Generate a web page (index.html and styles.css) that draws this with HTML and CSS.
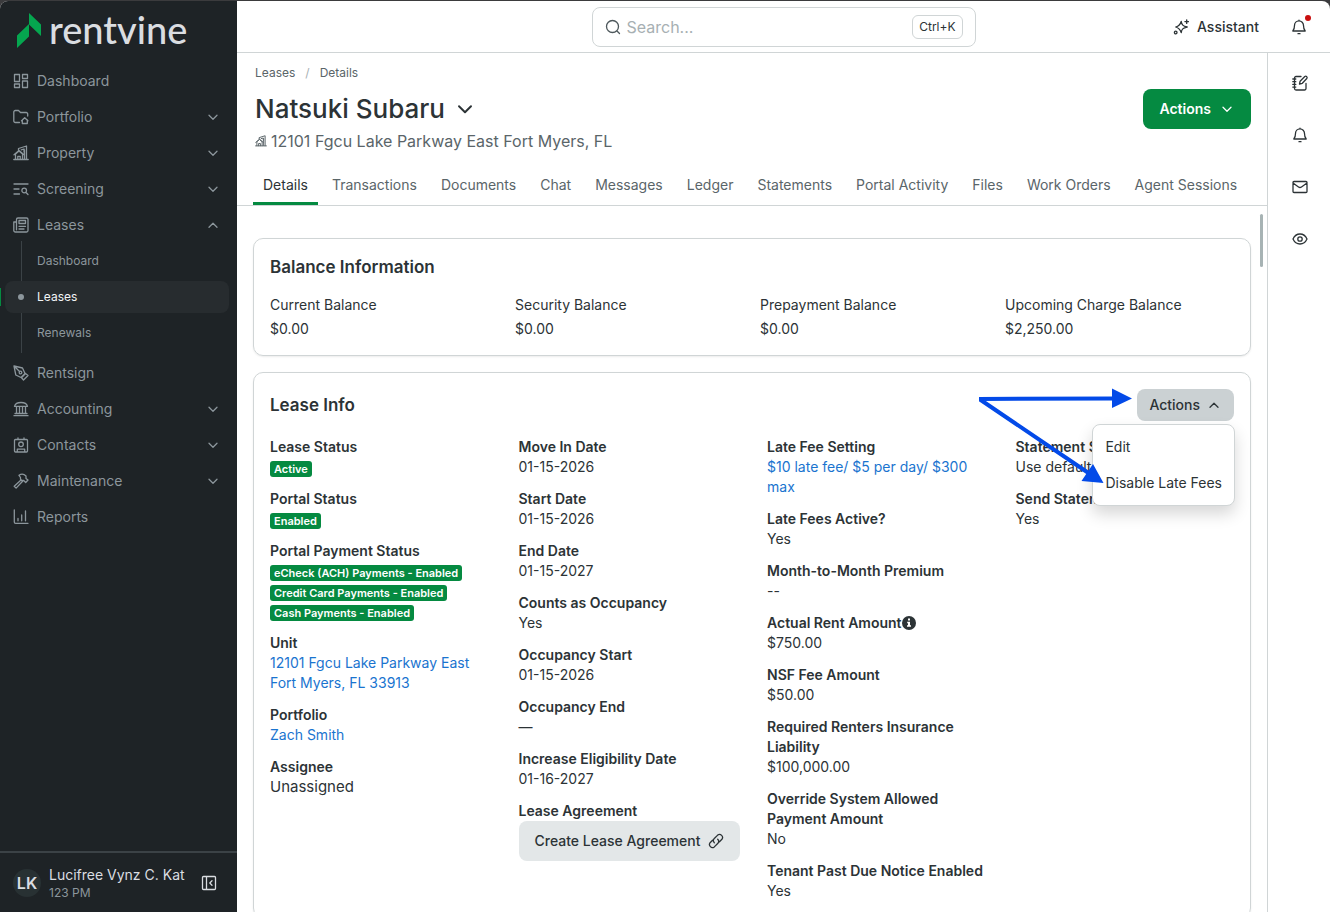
FILE: index.html
```html
<!DOCTYPE html>
<html lang="en">

<head>
  <meta charset="UTF-8">
  <meta name="viewport" content="width=device-width, initial-scale=1.0">
  <title>Natsuki Subaru - Rentvine</title>
  <link rel="stylesheet" href="styles.css">
</head>

<body>
  <svg class="sprite" aria-hidden="true">
    <symbol id="i-down" viewBox="0 0 16 16"><path d="M4 6.200 8 10.200 12 6.200"/></symbol>
    <symbol id="i-up" viewBox="0 0 16 16"><path d="M4 10.200 8 6.200l4 4"/></symbol>
    <symbol id="i-building" viewBox="0 0 16 16"><path d="M.8 14.500h14.400M2.500 14.300V9L6 6l3.500 3v5.300M1 9.800 6 5.500l5 4.300M4.800 14.300v-3h2.400v3M5.500 5V3.500L13.500 1v13.300M8.300 4.800l2.700-.8v3M11.500 5v9"/></symbol>
    <symbol id="i-bell" viewBox="0 0 16 16"><path d="M1.800 12h12.400c-1.300-1.500-1.700-2.800-1.700-5.600a4.500 4.500 0 0 0-9 0C3.500 9.200 3.100 10.500 1.800 12zM7 14.700h2M8 1.200v.5"/></symbol>
  </svg>

  <div class="app">
    <aside class="sidebar">
      <a class="logo" href="#">
        <svg viewBox="0 0 26 38" width="26" height="38" aria-hidden="true">
          <path d="M1 23.500 13 12v12.500L1 36z M13 1l12 11.500V24L13 12.500z"/>
        </svg>
        <span>rentvine</span>
      </a>

      <nav class="nav">
        <a class="nav-item" href="#">
          <svg viewBox="0 0 16 16"><path d="M1.500 1.500h5v7h-5zM9.500 1.500h5v4h-5zM1.500 11h5v3.500h-5zM9.500 8h5v6.500h-5z"/></svg>
          <span>Dashboard</span>
        </a>
        <button class="nav-item" type="button">
          <svg viewBox="0 0 16 16"><path d="M6.500 13.500H2.300A1.500 1.500 0 0 1 .8 12V3a1.500 1.500 0 0 1 1.500-1.500h3.200l2 2h5.700A1.500 1.500 0 0 1 14.700 5v2M8.500 11.800l3.200-3 3.200 3M9.300 11v3.500h5V11"/></svg>
          <span>Portfolio</span>
          <svg class="chev"><use href="#i-down"/></svg>
        </button>
        <button class="nav-item" type="button">
          <svg><use href="#i-building"/></svg>
          <span>Property</span>
          <svg class="chev"><use href="#i-down"/></svg>
        </button>
        <button class="nav-item" type="button">
          <svg viewBox="0 0 16 16"><path d="M1 3h14M1 8h5M1 13h5.500M13.500 9.500a2.300 2.300 0 1 1-4.600 0 2.300 2.300 0 0 1 4.600 0zM12.800 11.200l2.200 2.300"/></svg>
          <span>Screening</span>
          <svg class="chev"><use href="#i-down"/></svg>
        </button>
        <button class="nav-item" type="button">
          <svg viewBox="0 0 16 16"><path d="M3.500 12.800V2.500a1.500 1.500 0 0 1 1.500-1.500h8.500A1.500 1.500 0 0 1 15 2.500v11a1.500 1.500 0 0 1-1.500 1.500H2.300A1.500 1.500 0 0 1 .8 13.500V5h2.700M6 3.500h6.500v3H6zM6 9.300h6.500M6 12h5"/></svg>
          <span>Leases</span>
          <svg class="chev"><use href="#i-up"/></svg>
        </button>
        <div class="subnav">
          <a class="subnav-item" href="#">Dashboard</a>
          <a class="subnav-item active" href="#">Leases</a>
          <a class="subnav-item" href="#">Renewals</a>
        </div>
        <a class="nav-item" href="#">
          <svg viewBox="0 0 16 16"><path d="M1 1l8.500 2 2.500 5.500-4 4L2.800 10zM1 1l5.300 5.300M8.800 7.500a1.300 1.300 0 1 1-2.600 0 1.300 1.300 0 0 1 2.600 0zM8.500 12.800l4-4.300 2.500 2-4.500 4.500z"/></svg>
          <span>Rentsign</span>
        </a>
        <button class="nav-item" type="button">
          <svg viewBox="0 0 16 16"><path d="M1 14.700h14M2 12.500h12M1.500 5.300h13C14 3.500 11.500 1.500 8 1.500S2 3.500 1.500 5.300zM3.500 5.500v7M6.500 5.500v7M9.500 5.500v7M12.500 5.500v7"/></svg>
          <span>Accounting</span>
          <svg class="chev"><use href="#i-down"/></svg>
        </button>
        <button class="nav-item" type="button">
          <svg viewBox="0 0 16 16"><path d="M2.500 2.500h11a1 1 0 0 1 1 1v10.500a1 1 0 0 1-1 1h-11a1 1 0 0 1-1-1V3.500a1 1 0 0 1 1-1zM5 .8v1.700M11 .8v1.700M10.300 7.300a2.300 2.300 0 1 1-4.600 0 2.300 2.300 0 0 1 4.600 0zM4.300 14.500v-2.300h7.400v2.300"/></svg>
          <span>Contacts</span>
          <svg class="chev"><use href="#i-down"/></svg>
        </button>
        <button class="nav-item" type="button">
          <svg viewBox="0 0 16 16"><path d="M6 2.300c2.500-1.800 5-1.300 7 .7v2.500l2 1.500-2.300 2.500-2-2H8.800L7.500 6.200V4.500zM8 7l-6.800 6.200 1.900 1.900 6.500-6.800"/></svg>
          <span>Maintenance</span>
          <svg class="chev"><use href="#i-down"/></svg>
        </button>
        <a class="nav-item" href="#">
          <svg viewBox="0 0 16 16"><path d="M1.300 1v12a1.300 1.300 0 0 0 1.300 1.300H15M5 9.500v2.300M8.700 6v5.800M12.500 2v9.800"/></svg>
          <span>Reports</span>
        </a>
      </nav>

      <div class="user">
        <span class="avatar">LK</span>
        <div class="user-text">
          <p class="user-name">Lucifree Vynz C. Kat</p>
          <p class="user-time">123 PM</p>
        </div>
        <button class="icon-btn" type="button" aria-label="Collapse sidebar">
          <svg viewBox="0 0 16 16"><path d="M2.500 1.500h11a1 1 0 0 1 1 1v11a1 1 0 0 1-1 1h-11a1 1 0 0 1-1-1v-11a1 1 0 0 1 1-1zM5.500 1.500v13M11 5.800 8.800 8l2.200 2.200"/></svg>
        </button>
      </div>
    </aside>

    <div class="page">
      <header class="topbar">
        <label class="search" for="search">
          <svg viewBox="0 0 16 16"><path d="M13.500 7.500a6 6 0 1 1-12 0 6 6 0 0 1 12 0zM12 12l2.500 2.500"/></svg>
          <input id="search" type="text" placeholder="Search..." aria-label="Search">
          <kbd>Ctrl+K</kbd>
        </label>
        <div class="topbar-right">
          <button class="assistant" type="button">
            <svg viewBox="0 0 16 16"><path d="M8.200 2.300c.5 3.600 1.700 4.700 6 5.700-4.300 1-5.500 2.100-6 5.700-.9-3.600-2-4.700-5.500-5.700 3.500-1 4.600-2.100 5.500-5.700zM13.700.8v3.600M11.900 2.600h3.600M4 13.500a1.300 1.300 0 1 1-2.600 0 1.300 1.300 0 0 1 2.600 0z"/></svg>
            <span>Assistant</span>
          </button>
          <button class="icon-btn notify" type="button" aria-label="Notifications">
            <svg><use href="#i-bell"/></svg>
          </button>
        </div>
      </header>

      <div class="body">
        <main class="main">
          <div class="page-head">
            <div class="breadcrumb">
              <a href="#">Leases</a><span>/</span><a href="#">Details</a>
            </div>
            <div class="title-row">
              <h1>Natsuki Subaru</h1>
              <button class="icon-btn title-chev" type="button" aria-label="Switch lease">
                <svg><use href="#i-down"/></svg>
              </button>
              <button class="btn btn-primary" type="button">Actions <svg><use href="#i-down"/></svg></button>
            </div>
            <p class="address"><svg><use href="#i-building"/></svg> 12101 Fgcu Lake Parkway East Fort Myers, FL</p>
          </div>
          <nav class="tabs">
            <a class="active" href="#">Details</a>
            <a href="#">Transactions</a>
            <a href="#">Documents</a>
            <a href="#">Chat</a>
            <a href="#">Messages</a>
            <a href="#">Ledger</a>
            <a href="#">Statements</a>
            <a href="#">Portal Activity</a>
            <a href="#">Files</a>
            <a href="#">Work Orders</a>
            <a href="#">Agent Sessions</a>
          </nav>

          <div class="content">
            <section class="card balance">
              <h2>Balance Information</h2>
              <dl>
                <div><dt>Current Balance</dt><dd>$0.00</dd></div>
                <div><dt>Security Balance</dt><dd>$0.00</dd></div>
                <div><dt>Prepayment Balance</dt><dd>$0.00</dd></div>
                <div><dt>Upcoming Charge Balance</dt><dd>$2,250.00</dd></div>
              </dl>
            </section>

            <section class="card lease">
              <div class="card-head">
                <h2>Lease Info</h2>
                <div class="dropdown">
                  <button class="btn btn-small" type="button" aria-expanded="true">Actions <svg><use href="#i-up"/></svg></button>
                  <div class="menu">
                    <button type="button">Edit</button>
                    <button type="button">Disable Late Fees</button>
                  </div>
                  <svg class="arrows" viewBox="0 0 156 96" width="156" height="96" aria-hidden="true">
                    <path class="line" d="M1 10 136 9.500M2 10.500 112 85"/>
                    <path d="M134-.5 154 9.500 134 19zM125.500 94 103.500 92 115 75z"/>
                  </svg>
                </div>
              </div>

              <div class="columns">
                <dl>
                  <div><dt>Lease Status</dt><dd class="badges"><span>Active</span></dd></div>
                  <div><dt>Portal Status</dt><dd class="badges"><span>Enabled</span></dd></div>
                  <div>
                    <dt>Portal Payment Status</dt>
                    <dd class="badges">
                      <span>eCheck (ACH) Payments - Enabled</span>
                      <span>Credit Card Payments - Enabled</span>
                      <span>Cash Payments - Enabled</span>
                    </dd>
                  </div>
                  <div><dt>Unit</dt><dd><a href="#">12101 Fgcu Lake Parkway East<br>Fort Myers, FL 33913</a></dd></div>
                  <div><dt>Portfolio</dt><dd><a href="#">Zach Smith</a></dd></div>
                  <div><dt>Assignee</dt><dd class="assignee">Unassigned</dd></div>
                </dl>
                <dl>
                  <div><dt>Move In Date</dt><dd>01-15-2026</dd></div>
                  <div><dt>Start Date</dt><dd>01-15-2026</dd></div>
                  <div><dt>End Date</dt><dd>01-15-2027</dd></div>
                  <div><dt>Counts as Occupancy</dt><dd>Yes</dd></div>
                  <div><dt>Occupancy Start</dt><dd>01-15-2026</dd></div>
                  <div><dt>Occupancy End</dt><dd>—</dd></div>
                  <div><dt>Increase Eligibility Date</dt><dd>01-16-2027</dd></div>
                  <div>
                    <dt>Lease Agreement</dt>
                    <dd>
                      <button class="btn btn-light" type="button">Create Lease Agreement
                        <svg viewBox="0 0 16 16"><path d="M6.300 9.700a3 3 0 0 1 0-4.200l3.400-3.400a3 3 0 0 1 4.200 4.200L11.500 8.700M9.700 6.300a3 3 0 0 1 0 4.200l-3.400 3.400a3 3 0 0 1-4.200-4.200L4.500 7.300"/></svg>
                      </button>
                    </dd>
                  </div>
                </dl>
                <dl>
                  <div><dt>Late Fee Setting</dt><dd><a href="#">$10 late fee/ $5 per day/ $300 max</a></dd></div>
                  <div><dt>Late Fees Active?</dt><dd>Yes</dd></div>
                  <div><dt>Month-to-Month Premium</dt><dd>--</dd></div>
                  <div>
                    <dt>Actual Rent Amount<svg class="info" viewBox="0 0 14 14"><circle cx="7" cy="7" r="7"/><path d="M6 2.500h2v2H6zM5.200 5.800H8v3.500h1v1.500H5V9.300h1V7.200h-.8z"/></svg></dt>
                    <dd>$750.00</dd>
                  </div>
                  <div><dt>NSF Fee Amount</dt><dd>$50.00</dd></div>
                  <div><dt>Required Renters Insurance Liability</dt><dd>$100,000.00</dd></div>
                  <div><dt>Override System Allowed Payment Amount</dt><dd>No</dd></div>
                  <div><dt>Tenant Past Due Notice Enabled</dt><dd>Yes</dd></div>
                </dl>
                <dl>
                  <div><dt>Statement Setting</dt><dd>Use default</dd></div>
                  <div><dt>Send Statements</dt><dd>Yes</dd></div>
                </dl>
              </div>
            </section>
          </div>
          <span class="scroll-thumb"></span>
        </main>

        <aside class="rail">
          <button class="icon-btn" type="button" aria-label="Notes">
            <svg viewBox="0 0 16 16"><path d="M9 1.500H4A1.500 1.500 0 0 0 2.500 3v10.500A1.500 1.500 0 0 0 4 15h8.500a1.500 1.500 0 0 0 1.500-1.500V8.500M.8 4h3M.8 6.700h3M.8 9.400h3M.8 12.100h3M7.500 9l.6-2.800 4.700-4.700c1.400-.9 2.900.6 2 2L10.300 8.300z"/></svg>
          </button>
          <button class="icon-btn" type="button" aria-label="Alerts"><svg><use href="#i-bell"/></svg></button>
          <button class="icon-btn" type="button" aria-label="Messages">
            <svg viewBox="0 0 16 16"><path d="M2 2.500h12a1 1 0 0 1 1 1v9a1 1 0 0 1-1 1H2a1 1 0 0 1-1-1v-9a1 1 0 0 1 1-1zM1 4l5.500 4c1 .7 2 .7 3 0L15 4"/></svg>
          </button>
          <button class="icon-btn" type="button" aria-label="Watch">
            <svg viewBox="0 0 16 16"><path d="M1 8c1.500-3.300 4-5 7-5s5.500 1.700 7 5c-1.500 3.300-4 5-7 5S2.500 11.300 1 8zM10.200 8a2.200 2.200 0 1 1-4.400 0 2.200 2.200 0 0 1 4.400 0z"/></svg>
          </button>
        </aside>
      </div>
    </div>
  </div>
</body>

</html>
```
FILE: styles.css
```css
* {
  box-sizing: border-box;
}

body {
  margin: 0;
  padding-top: 1px;
  background-color: #3b3b3d;
  color: #2c3336;
  font-family: Inter, "Liberation Sans", sans-serif;
  font-size: 14px;
  line-height: 20px;
}

h1, h2, p, dl, dd {
  margin: 0;
}

a {
  color: inherit;
  text-decoration: none;
}

button {
  margin: 0;
  padding: 0;
  border: 0;
  background: none;
  color: inherit;
  font: inherit;
  cursor: pointer;
}

svg {
  width: 16px;
  height: 16px;
  flex-shrink: 0;
  fill: none;
  stroke: currentColor;
  stroke-width: 1.3;
  stroke-linecap: round;
  stroke-linejoin: round;
}

.sprite {
  display: none;
}

.app {
  display: flex;
  height: calc(100vh - 1px);
  border-radius: 8px 8px 0 0;
  overflow: hidden;
  background-color: white;
}

/* sidebar */
.sidebar {
  display: flex;
  flex-direction: column;
  flex-shrink: 0;
  width: 237px;
  background-color: #1e2326;
  color: #8c969c;
}

.logo {
  display: flex;
  align-items: center;
  gap: 7px;
  height: 64px;
  padding: 0 16px 4px;
  color: #dadde1;
  font-family: Lato, sans-serif;
  font-size: 38px;
  font-weight: 500;
  line-height: 38px;
}

.logo span {
  padding-bottom: 4px;
}

.logo svg {
  width: 26px;
  height: 38px;
  fill: #05a64f;
  stroke: none;
}

.nav {
  display: flex;
  flex-direction: column;
  flex-grow: 1;
  gap: 4px;
}

.nav-item {
  display: flex;
  align-items: center;
  gap: 8px;
  height: 32px;
  padding: 0 16px 0 13px;
  text-align: left;
}

.nav-item .chev {
  margin-left: auto;
}

.subnav {
  display: flex;
  flex-direction: column;
  gap: 4px;
  margin-top: -4px;
  padding: 4px 8px 4px 5px;
  background: linear-gradient(#3b4246, #3b4246) 21px 0 / 1px 100% no-repeat;
}

.subnav-item {
  position: relative;
  padding: 6px 32px;
  border-radius: 8px;
  font-size: 12px;
}

.subnav-item.active {
  background-color: #272c2f;
  color: #f2f4f5;
}

.subnav-item.active::before,
.subnav-item.active::after {
  position: absolute;
  content: "";
}

.subnav-item.active::before {
  top: 13px;
  left: 13px;
  width: 6px;
  height: 6px;
  border-radius: 50%;
  background-color: #8c969c;
}

.subnav-item.active::after {
  top: 7px;
  left: -5px;
  width: 1px;
  height: 18px;
  background-color: #058a41;
}

.user {
  display: flex;
  align-items: center;
  gap: 8px;
  height: 61px;
  padding: 0 20px 0 13px;
  border-top: 2px solid #3b4246;
  color: #dadde1;
}

.avatar {
  width: 28px;
  height: 28px;
  border-radius: 50%;
  background-color: #283133;
  font-size: 16px;
  font-weight: 600;
  line-height: 28px;
  text-align: center;
}

.user-text {
  flex-grow: 1;
  padding-top: 2px;
  line-height: 18px;
}

.user-time {
  color: #8c969c;
  font-size: 12px;
}

.icon-btn {
  display: flex;
  align-items: center;
  justify-content: center;
}

/* top bar */
.page {
  display: flex;
  flex-direction: column;
  flex-grow: 1;
  min-width: 0;
}

.topbar {
  display: grid;
  grid-template-columns: 1fr 384px 1fr;
  align-items: center;
  flex-shrink: 0;
  height: 52px;
  border-bottom: 1px solid #d0d5d6;
}

.search {
  display: flex;
  grid-column: 2;
  align-items: center;
  gap: 6px;
  height: 40px;
  padding: 0 12px;
  border: 1px solid #d0d5d6;
  border-radius: 8px;
  color: #4e585c;
}

.search input {
  flex-grow: 1;
  min-width: 0;
  padding: 0;
  border: 0;
  outline: 0;
  background: none;
  color: inherit;
  font: inherit;
  font-size: 16px;
}

.search input::placeholder {
  color: #a7b0b3;
}

.search kbd {
  padding: 1px 6px;
  border: 1px solid #d0d5d6;
  border-radius: 6px;
  color: #2c3336;
  font-family: inherit;
  font-size: 12px;
}

.topbar-right {
  display: flex;
  align-items: center;
  justify-content: flex-end;
  gap: 32px;
  padding-right: 23px;
}

.assistant {
  display: flex;
  align-items: center;
  gap: 8px;
  font-weight: 500;
}

.notify {
  position: relative;
}

.notify::after {
  position: absolute;
  content: "";
  top: -4px;
  right: -4px;
  width: 6px;
  height: 6px;
  border-radius: 50%;
  background-color: #c90f0f;
}

.body {
  display: flex;
  flex-grow: 1;
  min-height: 0;
}

.rail {
  display: flex;
  flex-direction: column;
  flex-shrink: 0;
  width: 63px;
  padding: 4px 0 0 2px;
  border-left: 1px solid #d0d5d6;
}

.rail .icon-btn {
  height: 52px;
}

/* page header */
.main {
  display: flex;
  position: relative;
  flex-direction: column;
  flex-grow: 1;
  min-width: 0;
}

.page-head {
  padding: 12px 16px 12px 18px;
}

.breadcrumb {
  display: flex;
  gap: 10px;
  color: #5a6569;
  font-size: 12px;
  line-height: 16px;
}

.breadcrumb span {
  color: #a7b0b3;
}

.title-row {
  display: flex;
  align-items: center;
  margin-top: 8px;
}

h1 {
  font-size: 26px;
  font-weight: 500;
  line-height: 36px;
}

.title-chev {
  margin: 0 auto 0 8px;
}

.title-chev svg {
  width: 24px;
  height: 24px;
}

.address {
  display: flex;
  align-items: center;
  gap: 4px;
  color: #5a6569;
  font-size: 16px;
  line-height: 24px;
}

.address svg {
  width: 12px;
  height: 12px;
}

.tabs {
  display: flex;
  gap: 4px;
  padding: 0 16px;
  border-bottom: 1px solid #d0d5d6;
  color: #5a6569;
  white-space: nowrap;
}

.tabs a {
  padding: 10px 10px 7px;
  border-bottom: 3px solid transparent;
}

.tabs a.active {
  border-color: #058a41;
  color: #2c3336;
}

.btn {
  display: inline-flex;
  align-items: center;
  gap: 8px;
  height: 40px;
  padding: 0 16px;
  border-radius: 8px;
  font-weight: 500;
  white-space: nowrap;
}

.btn-primary {
  background-color: #058a41;
  color: white;
  font-weight: 600;
}

.btn-small {
  gap: 6px;
  height: 32px;
  padding: 0 12px;
  background-color: #cbd1d3;
}

.btn-light {
  background-color: #e3e7e8;
}

/* cards */
.content {
  display: flex;
  flex-direction: column;
  gap: 16px;
  flex-grow: 1;
  min-height: 0;
  padding: 32px 16px;
  overflow-y: auto;
  scrollbar-width: none;
}

.scroll-thumb {
  position: absolute;
  top: 161px;
  right: 4px;
  width: 3px;
  height: 53px;
  border-radius: 2px;
  background-color: #a7b3b4;
}

.card {
  flex-shrink: 0;
  padding: 16px;
  border: 1px solid #d0d5d6;
  border-radius: 10px;
  box-shadow: 0 1px 2px rgba(0, 0, 0, .08);
}

h2 {
  font-size: 17px;
  font-weight: 600;
  line-height: 24px;
}

.balance {
  padding-bottom: 14px;
}

.balance dl {
  display: grid;
  grid-template-columns: repeat(4, 1fr);
  gap: 16px;
  margin-top: 14px;
  line-height: 24px;
}

.card-head {
  display: flex;
  align-items: center;
  justify-content: space-between;
  margin-bottom: 16px;
}

.dropdown {
  position: relative;
}

.menu {
  position: absolute;
  top: 35px;
  right: -1px;
  z-index: 1;
  padding: 4px;
  border: 1px solid #d0d5d6;
  border-radius: 8px;
  background-color: white;
  box-shadow: 0 8px 16px rgba(0, 0, 0, .16);
}

.menu button {
  display: block;
  width: 100%;
  padding: 8px;
  text-align: left;
  white-space: nowrap;
}

.arrows {
  position: absolute;
  top: 0;
  right: calc(100% + 3px);
  z-index: 2;
  width: 156px;
  height: 96px;
  overflow: visible;
  fill: #034ae8;
  stroke: none;
}

.arrows .line {
  stroke: #034ae8;
  stroke-width: 4;
  stroke-linecap: butt;
}

.columns {
  display: grid;
  grid-template-columns: repeat(4, minmax(0, 1fr));
  gap: 30px;
}

.columns dl {
  display: flex;
  flex-direction: column;
  gap: 12px;
}

.columns dt {
  font-weight: 600;
}

.columns a {
  color: #1a74cf;
}

.badges {
  display: flex;
  flex-direction: column;
  align-items: flex-start;
  gap: 4px;
  padding-top: 4px;
}

.badges span {
  padding: 0 4px;
  border-radius: 3px;
  background-color: #058a41;
  color: white;
  font-size: 11px;
  font-weight: 600;
  line-height: 16px;
}

.assignee {
  font-size: 15px;
}

.info {
  width: 14px;
  height: 14px;
  vertical-align: -2px;
  fill: #2c3336;
  stroke: none;
}

.info path {
  fill: white;
}
```
